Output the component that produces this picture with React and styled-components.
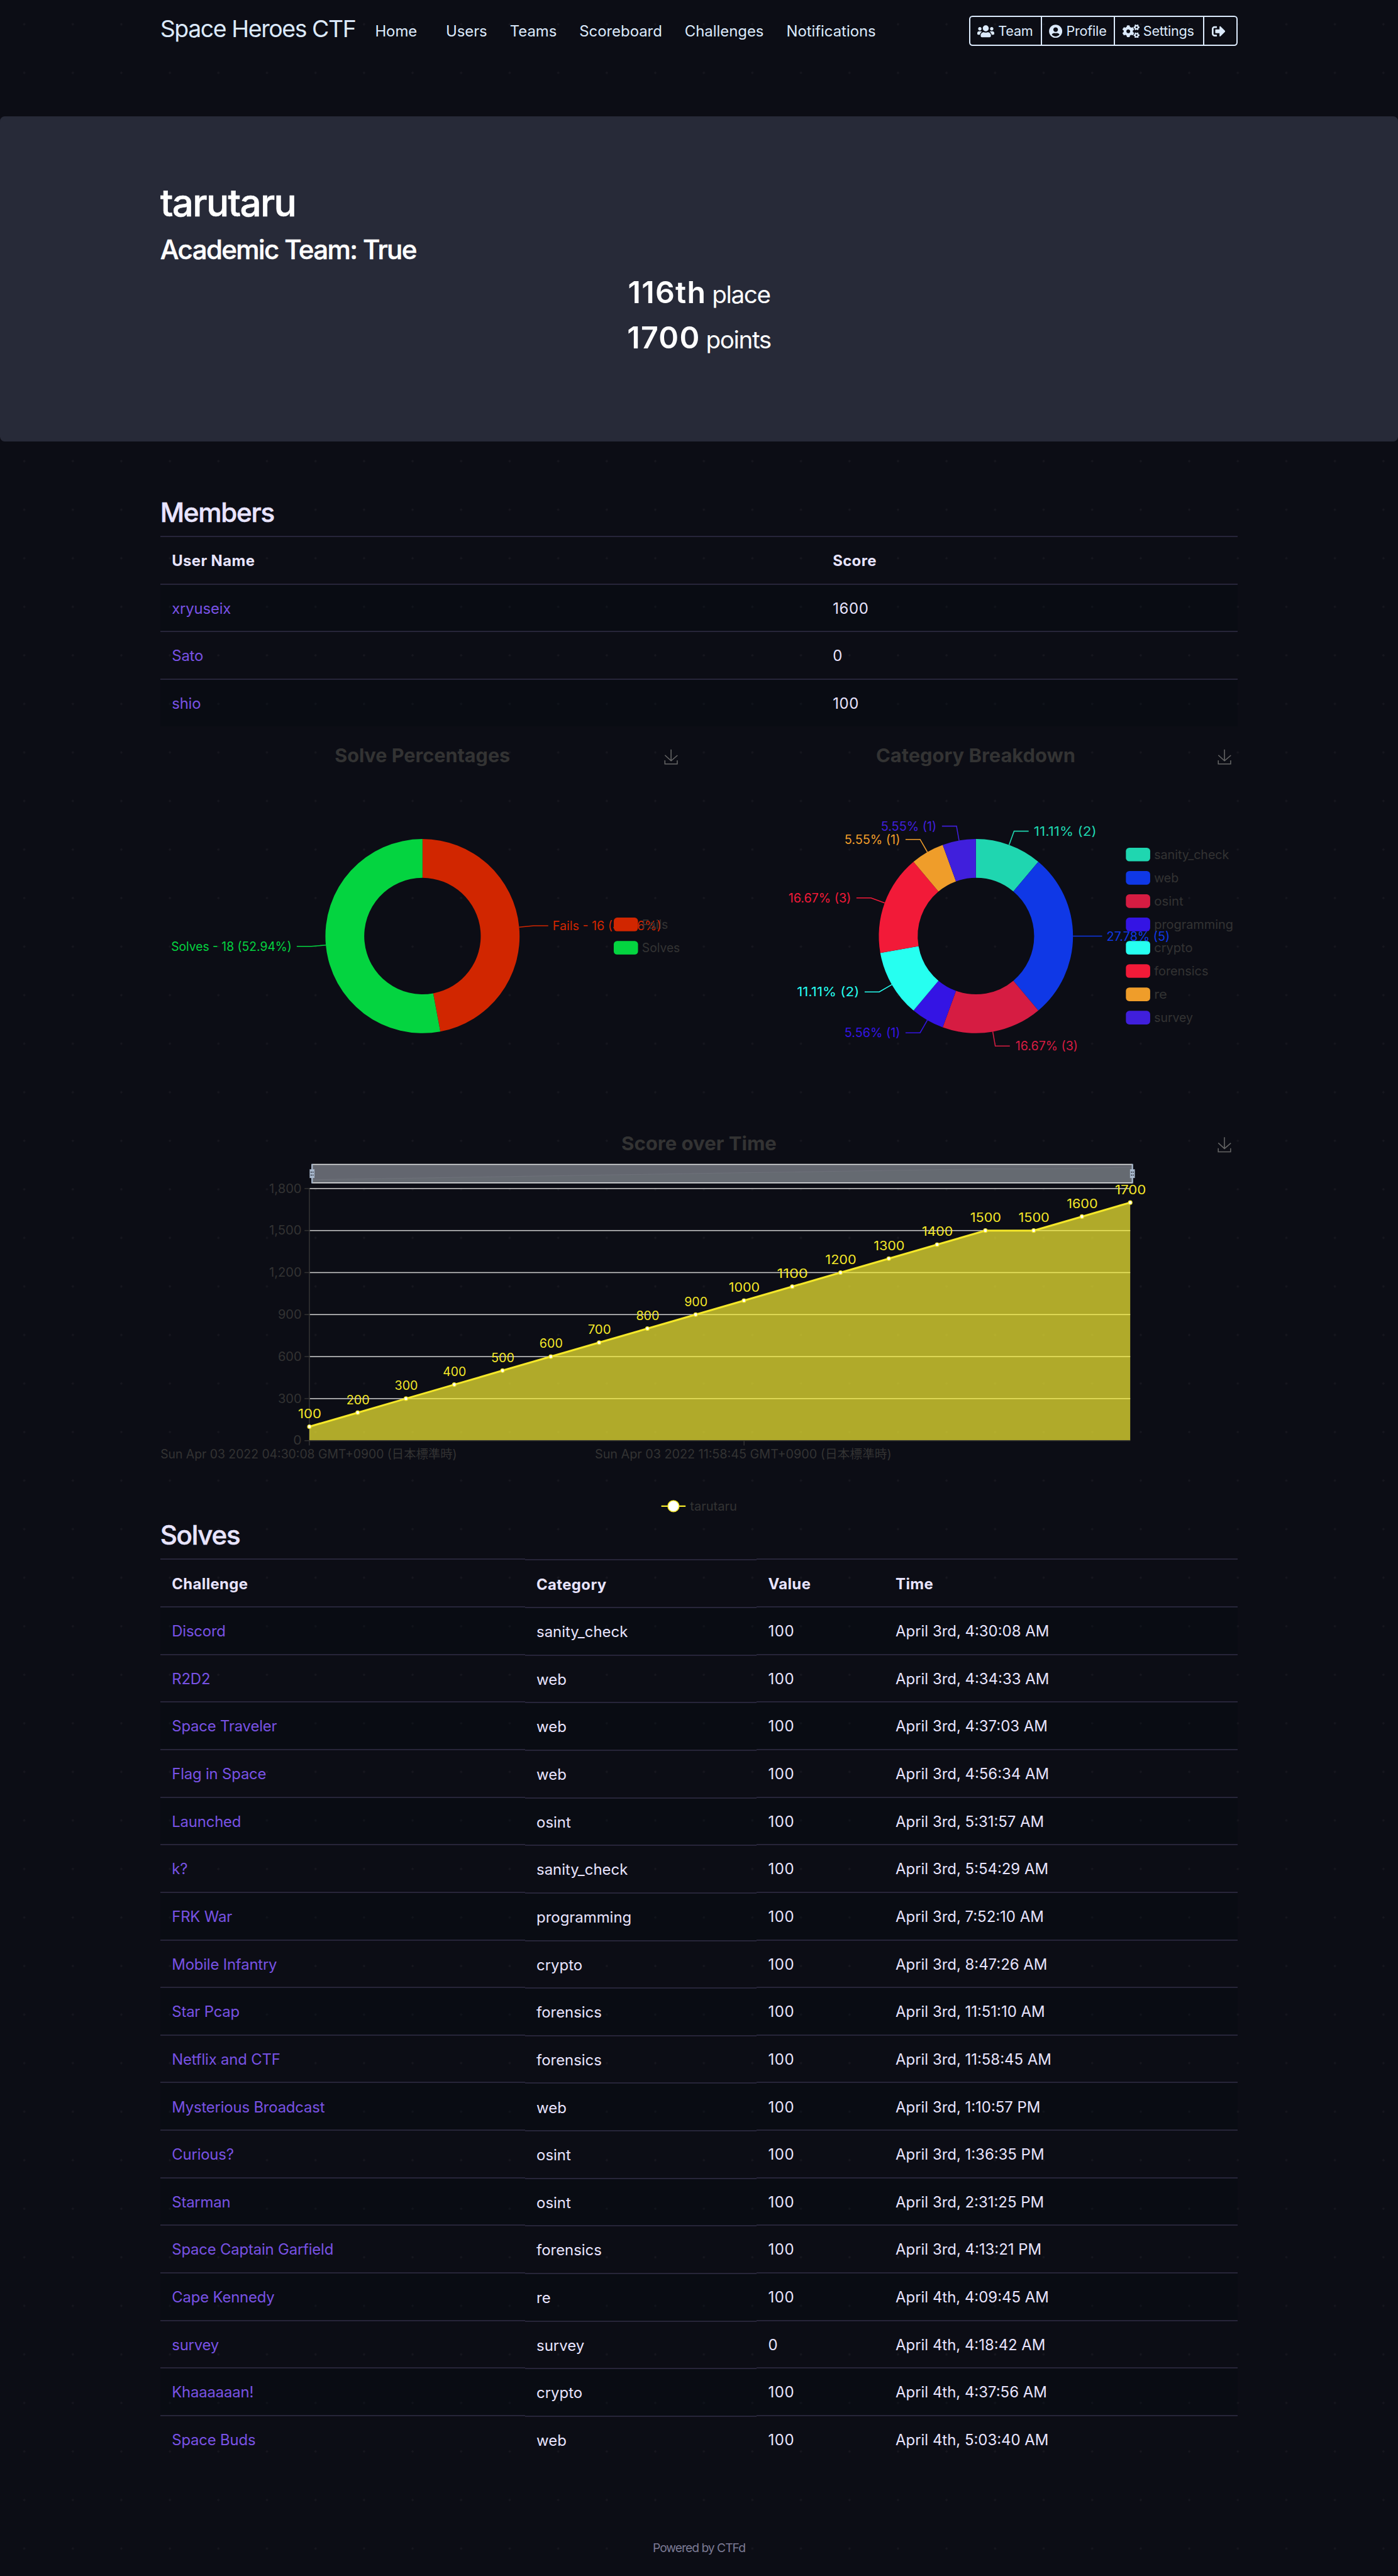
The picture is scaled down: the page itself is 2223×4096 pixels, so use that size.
import React from 'react';
import styled, { createGlobalStyle, css } from 'styled-components';
import { FaUsers, FaUserCircle, FaCogs, FaSignOutAlt } from 'react-icons/fa';

/* Sizes are given in design units, 32 to the rem. */
const u = (n) => `${n / 32}rem`;

const colors = {
  page: '#0c0d15',
  dot: '#17171f',
  panel: '#272a38',
  nav: '#dceafc',
  heading: '#e8e4ff',
  link: '#7852e4',
  line: '#272539',
  stripe: 'rgba(0, 14, 18, 0.24)',
  muted: '#333333',
  footer: '#7b7a94',
  yellow: '#f5e829',
};

const GlobalStyle = createGlobalStyle`
  html { font-size: 24.7px; }
  * { box-sizing: border-box; }
  body {
    margin: 0;
    color: ${colors.heading};
    background-color: ${colors.page};
    background-image: radial-gradient(circle, ${colors.dot} ${u(1.6)}, transparent ${u(2.8)});
    background-size: ${u(100)} ${u(100)};
    font-family: Inter, "Noto Sans CJK JP", sans-serif;
    font-size: ${u(31)};
    overflow-x: hidden;
  }
`;

const Page = styled.div`
  height: 4096px;
  overflow: hidden;
  display: flex;
  flex-direction: column;
`;

const Container = styled.div`
  width: ${u(2220)};
  margin: 0 auto;
`;

/* ---------- navigation ---------- */

const Navbar = styled(Container)`
  height: ${u(128)};
  margin-bottom: ${u(112)};
  flex: none;
  display: flex;
  align-items: center;
  color: ${colors.nav};
`;

const Brand = styled.span`
  margin-right: ${u(40)};
  padding-bottom: ${u(11.4)};
  font-size: ${u(48.5)};
  letter-spacing: -0.0375em;
  white-space: nowrap;
`;

const NavLinks = styled.nav`
  display: flex;
  gap: ${u(46.6)};
  padding-top: ${u(1.4)};
`;

const NavLink = styled.a`
  margin-right: ${(p) => (p.$wide ? u(12.5) : 0)};
  letter-spacing: -0.001em;
`;

const ButtonGroup = styled.div`
  display: flex;
  margin-left: auto;
  height: ${u(62)};
  border: 2px solid ${colors.nav};
  border-radius: ${u(7)};
`;

const NavButton = styled.a`
  display: flex;
  align-items: center;
  gap: ${u(8)};
  width: ${(p) => u(p.$width)};
  padding-left: ${u(14.5)};
  font-size: ${u(28)};
  letter-spacing: -0.01em;
  & + & { border-left: 2px solid ${colors.nav}; }
  svg { height: ${u(28)}; width: ${(p) => u(p.$icon)}; flex: none; }
`;

/* ---------- hero ---------- */

const Hero = styled.header`
  flex: none;
  height: ${u(669)};
  padding-top: ${u(130.3)};
  background: ${colors.panel};
  border-radius: ${u(9.6)};
  color: #fff;
`;

const TeamName = styled.h1`
  margin: 0 0 ${u(15)};
  font-size: ${u(78)};
  line-height: ${u(96)};
  font-weight: 500;
  -webkit-text-stroke: 0.6px currentColor;
  letter-spacing: -0.028em;
`;

const TeamField = styled.h3`
  margin: 0 0 ${u(14.8)};
  font-size: ${u(54.5)};
  line-height: ${u(67)};
  font-weight: 500;
  -webkit-text-stroke: 0.5px currentColor;
  letter-spacing: -0.0385em;
`;

const Stat = styled.h2`
  margin: 0 0 ${u(16.5)};
  font-size: ${u(62.5)};
  line-height: ${u(77)};
  font-weight: 600;
  letter-spacing: 0.028em;
  text-align: center;
  small {
    margin-left: -0.12em;
    font-size: ${u(50)};
    line-height: 1;
    font-weight: 400;
    letter-spacing: -0.036em;
  }
`;

/* ---------- tables ---------- */

const Section = styled.section`
  padding-top: ${(p) => u(p.$top || 0)};
`;

const SectionTitle = styled.h3`
  margin: 0 0 ${u(15.3)};
  font-size: ${u(54.5)};
  line-height: ${u(67)};
  font-weight: 500;
  -webkit-text-stroke: 0.5px currentColor;
  letter-spacing: -0.03em;
`;

const Table = styled.table`
  display: block;
  thead, tbody { display: block; }
`;

const Cell = styled.td`
  display: flex;
  align-items: center;
  height: ${u(98)};
  padding: ${u(2)} ${u(24)} 0;
  border-top: 2px solid ${colors.line};
  white-space: nowrap;
  text-align: left;
`;

const HeadCell = styled(Cell).attrs({ as: 'th' })`
  font-weight: 700;
  letter-spacing: 0.0155em;
`;

const TableRow = styled.tr`
  display: grid;
  grid-template-columns: ${(p) => p.$columns.map(u).join(' ')};
  ${(p) => p.$nudge && css`
    & > :nth-child(2) { transform: translateY(1px); }
  `}
  tbody &:nth-child(odd) > td { background: ${colors.stripe}; }
`;

const TextLink = styled.a`
  color: ${colors.link};
  letter-spacing: -0.008em;
`;

const Num = styled.span`
  letter-spacing: 0.028em;
`;

const MEMBER_COLUMNS = [1361.5, 858.5];
const SOLVE_COLUMNS = [751.2, 477.3, 262.5, 729];

const members = [['xryuseix', '1600'], ['Sato', '0'], ['shio', '100']];

const solves = [
  ['Discord', 'sanity_check', '100', 'April 3rd, 4:30:08 AM'],
  ['R2D2', 'web', '100', 'April 3rd, 4:34:33 AM'],
  ['Space Traveler', 'web', '100', 'April 3rd, 4:37:03 AM'],
  ['Flag in Space', 'web', '100', 'April 3rd, 4:56:34 AM'],
  ['Launched', 'osint', '100', 'April 3rd, 5:31:57 AM'],
  ['k?', 'sanity_check', '100', 'April 3rd, 5:54:29 AM'],
  ['FRK War', 'programming', '100', 'April 3rd, 7:52:10 AM'],
  ['Mobile Infantry', 'crypto', '100', 'April 3rd, 8:47:26 AM'],
  ['Star Pcap', 'forensics', '100', 'April 3rd, 11:51:10 AM'],
  ['Netflix and CTF', 'forensics', '100', 'April 3rd, 11:58:45 AM'],
  ['Mysterious Broadcast', 'web', '100', 'April 3rd, 1:10:57 PM'],
  ['Curious?', 'osint', '100', 'April 3rd, 1:36:35 PM'],
  ['Starman', 'osint', '100', 'April 3rd, 2:31:25 PM'],
  ['Space Captain Garfield', 'forensics', '100', 'April 3rd, 4:13:21 PM'],
  ['Cape Kennedy', 're', '100', 'April 4th, 4:09:45 AM'],
  ['survey', 'survey', '0', 'April 4th, 4:18:42 AM'],
  ['Khaaaaaan!', 'crypto', '100', 'April 4th, 4:37:56 AM'],
  ['Space Buds', 'web', '100', 'April 4th, 5:03:40 AM'],
];

/* ---------- charts ---------- */

const ChartRow = styled.div`
  display: flex;
  justify-content: space-between;
`;

const Chart = styled.svg`
  display: block;
  width: ${(p) => u(p.$w)};
  height: ${(p) => u(p.$h)};
  overflow: visible;
  font-family: Inter, "Noto Sans CJK JP", sans-serif;
`;

/* Text whose glyphs run from x1 to x2 on baseline y. */
const Label = ({ x1, x2, y, fill = colors.muted, size = 25.5, weight = 400, children }) => (
  <text x={x1 - 1.8} y={y} textLength={x2 - x1 + 2.8} lengthAdjust="spacingAndGlyphs"
    fill={fill} fontSize={size} fontWeight={weight}>{children}</text>
);

const Download = ({ x, y }) => (
  <path transform={`translate(${x} ${y}) scale(0.517)`} fill="none" stroke="#666" strokeWidth="3.87"
    d="M4.7,22.9L29.3,45.5L54.7,23.4M4.6,43.6L4.6,58L53.8,58L53.8,43.6M29.2,45.1L29.2,0" />
);

const polar = (cx, cy, r, deg) => {
  const a = ((deg - 90) * Math.PI) / 180;
  return [cx + r * Math.cos(a), cy + r * Math.sin(a)];
};

const ring = (cx, cy, from, to) => {
  const big = to - from > 180 ? 1 : 0;
  const [a, b, c, d] = [polar(cx, cy, 200, from), polar(cx, cy, 200, to), polar(cx, cy, 120, to), polar(cx, cy, 120, from)];
  return `M${a}A200 200 0 ${big} 1 ${b}L${c}A120 120 0 ${big} 0 ${d}Z`;
};

const Donut = ({ cx, cy, slices }) => {
  const total = slices.reduce((s, d) => s + d.value, 0);
  let at = 0;
  return slices.map((d) => {
    const from = at;
    at += (d.value / total) * 360;
    const mid = (from + at) / 2;
    const edge = polar(cx, cy, 200, mid);
    const elbow = polar(cx, cy, 230, mid);
    const end = [elbow[0] + (mid < 180 ? 30 : -30), elbow[1]];
    return (
      <g key={d.name}>
        <path d={ring(cx, cy, from, at)} fill={d.color} />
        <polyline points={[edge, elbow, end].join(' ')} fill="none" stroke={d.color} strokeWidth="2" />
        <Label x1={d.label[0]} x2={d.label[1]} y={elbow[1] + 9.2} fill={d.color}>{d.text}</Label>
      </g>
    );
  });
};

const Legend = ({ x, y, items }) => items.map((d, i) => (
  <g key={d.name}>
    <rect x={x} y={y + i * 48} width="50" height="28" rx="7" fill={d.color} />
    <Label x1={x + 60} x2={d.nameEnd} y={y + i * 48 + 23.3}>{d.name}</Label>
  </g>
));

const results = [
  { name: 'Fails', value: 16, color: '#d12600', text: 'Fails - 16 (47.06%)', label: [1140, 1361], nameEnd: 1375 },
  { name: 'Solves', value: 18, color: '#04d440', text: 'Solves - 18 (52.94%)', label: [354, 599.5], nameEnd: 1399.5 },
];

const categories = [
  { name: 'sanity_check', value: 2, color: '#1fd6b0', text: '11.11% (2)', label: [2131, 2257.5], nameEnd: 2530.5 },
  { name: 'web', value: 5, color: '#0f38e6', text: '27.78% (5)', label: [2281, 2408.5], nameEnd: 2426.7 },
  { name: 'osint', value: 3, color: '#d61c42', text: '16.67% (3)', label: [2093.5, 2219], nameEnd: 2436.5 },
  { name: 'programming', value: 1, color: '#3414e4', text: '5.56% (1)', label: [1741, 1853], nameEnd: 2539 },
  { name: 'crypto', value: 2, color: '#26fff0', text: '11.11% (2)', label: [1643, 1768.7], nameEnd: 2455.5 },
  { name: 'forensics', value: 3, color: '#f21a38', text: '16.67% (3)', label: [1625.5, 1751.8], nameEnd: 2487.8 },
  { name: 're', value: 1, color: '#ef9d2a', text: '5.55% (1)', label: [1741, 1853], nameEnd: 2403 },
  { name: 'survey', value: 1, color: '#401fdc', text: '5.55% (1)', label: [1816, 1928], nameEnd: 2456 },
];

const scores = [100, 200, 300, 400, 500, 600, 700, 800, 900, 1000, 1100, 1200, 1300, 1400, 1500, 1500, 1600, 1700];
const LEFT = 637;
const RIGHT = 2328;
const BASE = 2968;
const px = (i) => LEFT + (i * (RIGHT - LEFT)) / (scores.length - 1);
const py = (v) => BASE - (v * 519.3) / 1800;
const trace = scores.map((v, i) => `${px(i)},${py(v)}`).join(' ');
const shadow = scores.map((v, i) => `${644 + (i * 1688) / 17},${2432.1 - v * 0.016}`).join(' ');
const yTicks = [[0, '0', 605.5], [300, '300', 574], [600, '600', 574], [900, '900', 574], [1200, '1,200', 556], [1500, '1,500', 556], [1800, '1,800', 556]];

const Handle = ({ x }) => (
  <g>
    <rect x={x - 1.5} y="2398" width="3" height="40" fill="#a7b7cc" />
    <rect x={x - 5} y="2409" width="10" height="18" fill="#a7b7cc" />
    <path d={`M${x - 3} 2415h2.5m1.5 0h2M${x - 3} 2421h2.5m1.5 0h2`} stroke="#23252f" strokeWidth="2" />
  </g>
);

const SolvePie = () => (
  <Chart $w={1080} $h={800} viewBox="330 1496 1080 800">
    <Label x1={691} x2={1049.6} y={1570.3} size={39} weight={700}>Solve Percentages</Label>
    <Download x={1367} y={1543.5} />
    <Donut cx={870} cy={1928} slices={results} />
    <Legend x={1264} y={1890} items={results} />
  </Chart>
);

const CategoryPie = () => (
  <Chart $w={1080} $h={800} viewBox="1470 1496 1080 800">
    <Label x1={1806} x2={2214} y={1570.3} size={39} weight={700}>Category Breakdown</Label>
    <Download x={2507} y={1543.5} />
    <Legend x={2319} y={1746} items={categories} />
    <Donut cx={2010} cy={1928} slices={categories} />
  </Chart>
);

const ScoreChart = () => (
  <Chart $w={2220} $h={832.7} viewBox="330 2296 2220 832.7">
    <Label x1={1281.5} x2={1598.5} y={2370.4} size={39} weight={700}>Score over Time</Label>
    <Download x={2507} y={2343} />
    {yTicks.map(([v, t, x1]) => (
      <g key={v}>
        {v > 0 && <rect x={LEFT} y={py(v) - 1} width={RIGHT - LEFT} height="2" fill="#cccccc" />}
        <rect x="627" y={py(v) - 1} width="10" height="2" fill={colors.muted} />
        <Label x1={x1} x2={620} y={py(v) + 8.8}>{t}</Label>
      </g>
    ))}
    <rect x="636" y="2448" width="2" height="530" fill={colors.muted} />
    <rect x="1531.5" y={BASE} width="2" height="10" fill={colors.muted} />
    <polygon points={`${LEFT},${BASE} ${trace} ${RIGHT},${BASE}`} fill="#f7ee33" fillOpacity="0.7" />
    <rect x={LEFT} y={BASE - 1} width={RIGHT - LEFT} height="2" fill={colors.muted} />
    <polyline points={trace} fill="none" stroke={colors.yellow} strokeWidth="4" strokeLinejoin="bevel" />
    {scores.map((v, i) => {
      const half = v < 1000 ? 22.5 : 30.5;
      return (
        <g key={i}>
          <circle cx={px(i)} cy={py(v)} r="3.8" fill="#fff" stroke={colors.yellow} strokeWidth="1.6" />
          <Label x1={px(i) + 1 - half} x2={px(i) + 1 + half} y={py(v) - 17.6} fill={colors.yellow}>{v}</Label>
        </g>
      );
    })}
    <rect x="643" y="2398" width="1689" height="40" fill="#63666f" />
    <polygon points={`644,2436 ${shadow} 2332,2436`} fill="#656a71" />
    <polyline points={shadow} fill="none" stroke="#6d7079" strokeWidth="1.5" />
    <path d="M643 2399H2332M643 2437H2332" stroke="#dfe1e1" strokeWidth="2" />
    <Handle x={642.5} />
    <Handle x={2332.5} />
    <Label x1={332} x2={940} y={3005}>Sun Apr 03 2022 04:30:08 GMT+0900 (日本標準時)</Label>
    <Label x1={1227} x2={1835.5} y={3005}>Sun Apr 03 2022 11:58:45 GMT+0900 (日本標準時)</Label>
    <path d="M1362 3103H1412" stroke={colors.yellow} strokeWidth="3" />
    <circle cx="1387" cy="3103" r="11.5" fill="#fff" stroke={colors.yellow} strokeWidth="2" />
    <Label x1={1423} x2={1517} y={3111.7}>tarutaru</Label>
  </Chart>
);

const Footer = styled.footer`
  margin-top: auto;
  height: ${u(74)};
  text-align: center;
  font-size: ${u(25)};
  line-height: ${u(32)};
  letter-spacing: -0.052em;
  color: ${colors.footer};
`;

export default function App() {
  return (
    <Page>
      <GlobalStyle />
      <Navbar>
        <Brand>Space Heroes CTF</Brand>
        <NavLinks>
          <NavLink $wide>Home</NavLink>
          <NavLink>Users</NavLink>
          <NavLink>Teams</NavLink>
          <NavLink>Scoreboard</NavLink>
          <NavLink>Challenges</NavLink>
          <NavLink>Notifications</NavLink>
        </NavLinks>
        <ButtonGroup>
          <NavButton $width={145} $icon={35}><FaUsers />Team</NavButton>
          <NavButton $width={151} $icon={27.5}><FaUserCircle />Profile</NavButton>
          <NavButton $width={184} $icon={35}><FaCogs />Settings</NavButton>
          <NavButton $width={68.5} $icon={28}><FaSignOutAlt /></NavButton>
        </ButtonGroup>
      </Navbar>

      <Hero>
        <Container>
          <TeamName>tarutaru</TeamName>
          <TeamField>Academic Team: True</TeamField>
          <Stat>116th <small>place</small></Stat>
          <Stat>1700 <small>points</small></Stat>
        </Container>
      </Hero>

      <Container>
        <Section $top={112.7}>
          <SectionTitle>Members</SectionTitle>
          <Table>
            <thead>
              <TableRow $columns={MEMBER_COLUMNS}>
                <HeadCell>User Name</HeadCell>
                <HeadCell>Score</HeadCell>
              </TableRow>
            </thead>
            <tbody>
              {members.map(([name, score]) => (
                <TableRow key={name} $columns={MEMBER_COLUMNS}>
                  <Cell><TextLink>{name}</TextLink></Cell>
                  <Cell><Num>{score}</Num></Cell>
                </TableRow>
              ))}
            </tbody>
          </Table>
        </Section>

        <ChartRow>
          <SolvePie />
          <CategoryPie />
        </ChartRow>
        <ScoreChart />

        <Section>
          <SectionTitle>Solves</SectionTitle>
          <Table>
            <thead>
              <TableRow $columns={SOLVE_COLUMNS} $nudge>
                <HeadCell>Challenge</HeadCell>
                <HeadCell>Category</HeadCell>
                <HeadCell>Value</HeadCell>
                <HeadCell>Time</HeadCell>
              </TableRow>
            </thead>
            <tbody>
              {solves.map(([name, category, value, time]) => (
                <TableRow key={name} $columns={SOLVE_COLUMNS} $nudge>
                  <Cell><TextLink>{name}</TextLink></Cell>
                  <Cell>{category}</Cell>
                  <Cell><Num>{value}</Num></Cell>
                  <Cell>{time}</Cell>
                </TableRow>
              ))}
            </tbody>
          </Table>
        </Section>
      </Container>

      <Footer>Powered by CTFd</Footer>
    </Page>
  );
}
